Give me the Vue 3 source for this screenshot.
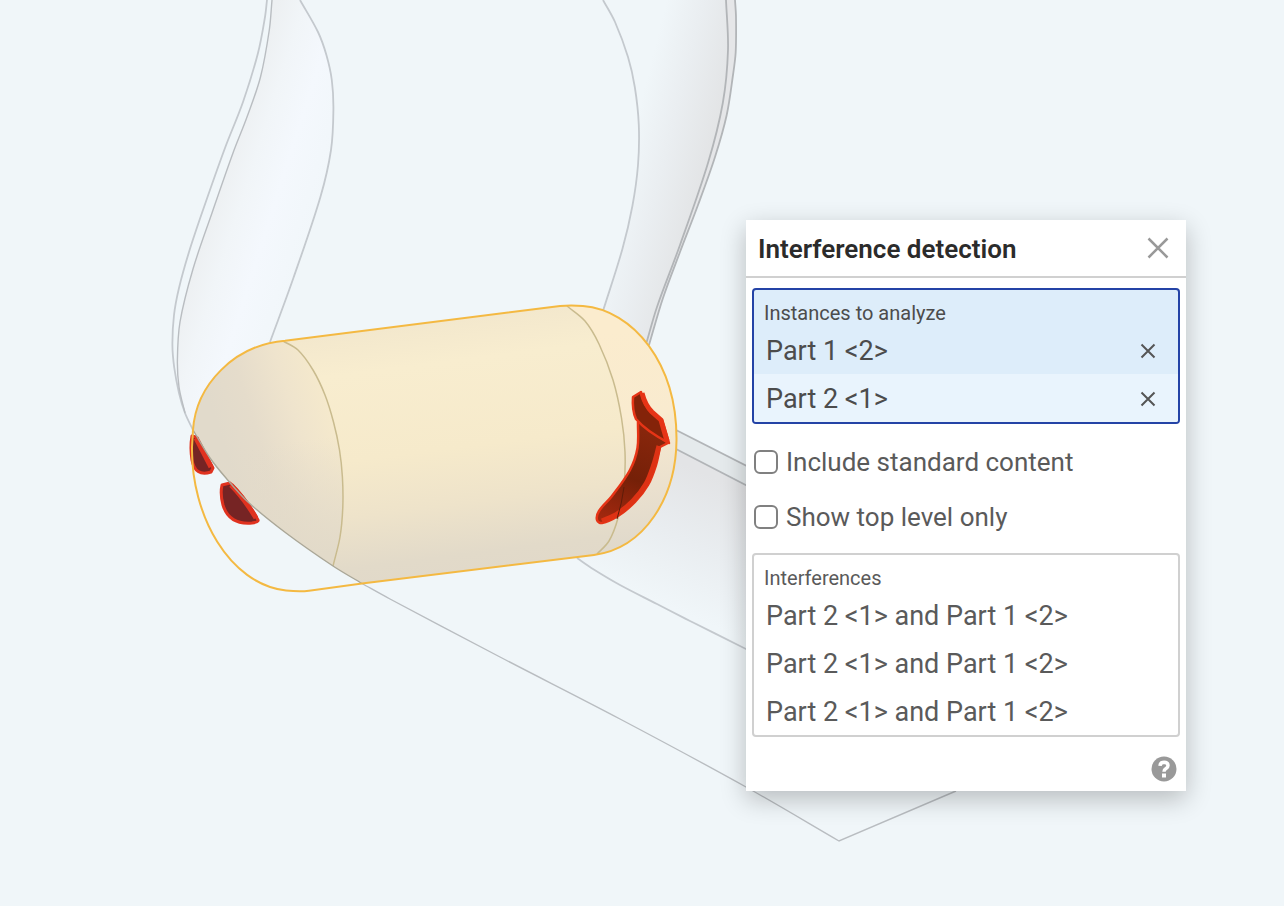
<script setup>
import { ref } from 'vue'

const instances = ref(['Part 1 <2>', 'Part 2 <1>'])
const interferences = [1, 2, 3].map((id) => ({ id, text: 'Part 2 <1> and Part 1 <2>' }))
const includeStandard = ref(false)
const topLevelOnly = ref(false)
const open = ref(true)

// Smooth curve through the points; handle lengths follow each segment's own length.
function spline(points) {
  const n = points.length
  const at = (i) => points[Math.min(Math.max(i, 0), n - 1)]
  const handle = (from, to, length) => {
    const size = Math.hypot(to[0] - from[0], to[1] - from[1]) || 1
    return [((to[0] - from[0]) / size) * length, ((to[1] - from[1]) / size) * length]
  }
  let d = `M${points[0]}`
  for (let i = 0; i < n - 1; i++) {
    const [a, b, c, e] = [at(i - 1), at(i), at(i + 1), at(i + 2)]
    const length = Math.hypot(c[0] - b[0], c[1] - b[1]) / 3
    const out = handle(a, c, length)
    const back = handle(b, e, length)
    d += `C${b[0] + out[0]},${b[1] + out[1]} ${c[0] - back[0]},${c[1] - back[1]} ${c}`
  }
  return d
}
const joined = (d) => d.replace(/^M/, 'L')

const leftOuter = [[267, 0], [265, 17], [258, 53], [243, 102], [225, 148], [203, 210], [189, 252], [179, 288], [174, 315], [172.4, 345], [174.3, 368], [179, 393], [185, 413], [193, 430]]
const leftInner = [[272, 0], [269.3, 30], [260.5, 77], [247, 117], [233, 153], [212, 213], [193, 269], [180, 322], [177.4, 360], [179, 387], [185, 413]]
const leftFront = [[300, 0], [318, 32], [326.4, 55], [331.8, 80], [333.4, 110], [331, 150], [320.4, 197], [293.4, 278], [270, 342]]
const rightFront = [[603, 0], [615, 22], [628, 57], [634.8, 87], [638.8, 125], [638, 165], [632.4, 206], [622.4, 249], [603, 311]]
const rightInner = [[726, 0], [728, 50], [722.8, 103], [708, 163], [680, 245], [657, 307], [646.7, 342]]
const rightOuter = [[735, 0], [736, 17], [735.7, 52], [733, 75], [726.7, 115], [715, 157], [698, 205], [680, 252], [663, 298], [649, 345]]
const cut = [[193, 430], [210, 458], [226, 478], [248, 502], [286, 533], [333, 566], [362, 583.5]]
const ground = [[362, 583.5], [390, 599], [500, 657], [620, 719], [746, 787], [839, 841]]
const lowerEdge = [[577, 558], [593, 569], [620, 585], [657, 604], [690, 621], [746, 649], [800, 677]]
const leftSeam = [[283, 341], [298, 350], [313, 370], [325, 395], [333.5, 422], [339.5, 450], [342.4, 477], [342.8, 507], [340, 537], [333, 566]]
const rightSeam = [[567, 306], [585, 321], [599, 344], [613, 380], [621.5, 418], [625, 452], [624, 485], [618, 518], [609, 541], [597, 554]]

const capTop = 'M193 430C196 385 234 345 285 340.7'
const capRight = 'L540 308.500L560 306Q571 305 583 306C633 310 677 363 676.500 440C676 497 645 548 594 555'
const bodyOutline = `${capTop}${capRight}L362 583.500`
const lowerOutline = 'M362 583.500L309 590.700Q300 592 286 590.500C229 584 191 515 192 447L193 430'
const body = bodyOutline + joined(spline([...cut].reverse())) + 'Z'
const dome = capTop + joined(spline(leftSeam)) + joined(spline(cut.slice(0, 6).reverse())) + 'Z'
const farCap = 'M567 306L583 306C633 310 677 363 676.500 440C676 497 645 548 597 554' + joined(spline([...rightSeam].reverse())) + 'Z'
const leftFace = spline(leftInner) + 'L193 430 L213 385 L233 365 L270 342' + joined(spline([...leftFront].reverse())) + 'Z'
const rightFace = spline(rightFront) + 'L649 345' + joined(spline([...rightInner].reverse())) + 'Z'
const rightRim = spline(rightInner) + joined(spline([...rightOuter].reverse())) + 'Z'
const lowerFace = spline(lowerEdge) + 'L800 515 L676 449 L675 460 L655 507 L640 525 L615 546Z'

const hornTail = spline([[638, 422], [637.5, 448], [630, 470], [612, 496], [599, 511], [597, 520], [602, 523], [618, 516], [635, 502], [648, 485], [656, 465], [660, 447]]) + 'L668 443 L640 422Z'
const hornShine = spline([[659, 446], [654, 464], [646, 484], [633, 501], [617, 514], [602, 521]])
</script>

<template>
  <main class="workspace">
    <svg class="model" viewBox="0 0 1284 906" preserveAspectRatio="xMinYMin slice" role="img" aria-label="Model view">
      <defs>
        <linearGradient id="leftShade" gradientUnits="userSpaceOnUse" x1="215" y1="200" x2="325" y2="235">
          <stop offset="0" stop-color="#edf0f2" />
          <stop offset=".22" stop-color="#f1f5f8" />
          <stop offset=".5" stop-color="#f4f8fd" />
          <stop offset="1" stop-color="#f0f6f9" />
        </linearGradient>
        <linearGradient id="rightShade" gradientUnits="userSpaceOnUse" x1="634" y1="130" x2="722" y2="152">
          <stop offset="0" stop-color="#f0f6f9" />
          <stop offset=".4" stop-color="#eaeef1" />
          <stop offset="1" stop-color="#e1e2e3" />
        </linearGradient>
        <linearGradient id="lowerShade" gradientUnits="userSpaceOnUse" x1="720" y1="480" x2="665" y2="605">
          <stop offset="0" stop-color="#e3e4e6" />
          <stop offset=".5" stop-color="#e9edf0" />
          <stop offset="1" stop-color="#f0f6f9" />
        </linearGradient>
        <linearGradient id="bodyShade" gradientUnits="userSpaceOnUse" x1="430" y1="323" x2="462" y2="575">
          <stop offset="0" stop-color="#f3e8cd" />
          <stop offset=".16" stop-color="#f8edcf" />
          <stop offset=".5" stop-color="#f6eacb" />
          <stop offset=".72" stop-color="#eee3ca" />
          <stop offset=".92" stop-color="#e2dac9" />
          <stop offset="1" stop-color="#e1d9c9" />
        </linearGradient>
        <linearGradient id="domeShade" gradientUnits="userSpaceOnUse" x1="222" y1="440" x2="335" y2="405">
          <stop offset="0" stop-color="#e1dacb" />
          <stop offset=".3" stop-color="#e5dccb" />
          <stop offset=".65" stop-color="#efe4cd" />
          <stop offset="1" stop-color="#f6eacc" />
        </linearGradient>
        <linearGradient id="domeFoot" gradientUnits="userSpaceOnUse" x1="300" y1="440" x2="315" y2="555">
          <stop offset="0" stop-color="#e2dac9" stop-opacity="0" />
          <stop offset="1" stop-color="#e2dac9" />
        </linearGradient>
        <linearGradient id="capShade" gradientUnits="userSpaceOnUse" x1="620" y1="330" x2="642" y2="545">
          <stop offset="0" stop-color="#fbecce" />
          <stop offset=".4" stop-color="#f9ebcf" />
          <stop offset=".75" stop-color="#eae0ce" />
          <stop offset="1" stop-color="#e0d9cb" />
        </linearGradient>
        <linearGradient id="hornShade" gradientUnits="userSpaceOnUse" x1="640" y1="430" x2="605" y2="520">
          <stop offset="0" stop-color="#87260c" />
          <stop offset=".5" stop-color="#752008" />
          <stop offset="1" stop-color="#a3280f" />
        </linearGradient>
      </defs>

      <path :d="leftFace" fill="url(#leftShade)" />
      <path :d="rightFace" fill="url(#rightShade)" />
      <path :d="rightRim" fill="#e5e6e8" />
      <path d="M676 430L800 493V515L676 449Z" fill="#e5eaec" />
      <path :d="lowerFace" fill="url(#lowerShade)" />

      <g class="edge">
        <path :d="spline(leftOuter)" />
        <path :d="spline(leftInner)" class="fine" />
        <path :d="spline(leftFront)" />
        <path :d="spline(rightFront)" />
        <path :d="spline(rightInner)" class="dark" />
        <path :d="spline(rightOuter)" class="dark" />
        <path d="M676 430L800 493M676 449L800 513" class="dark" />
        <path :d="spline(lowerEdge)" />
        <path :d="spline(ground) + 'L956 791'" class="fine" />
      </g>

      <path :d="body" fill="url(#bodyShade)" />
      <path :d="dome" fill="url(#domeShade)" />
      <path :d="dome" fill="url(#domeFoot)" />
      <path :d="farCap" fill="url(#capShade)" />
      <g class="seam">
        <path :d="spline(leftSeam)" />
        <path :d="spline(rightSeam)" />
      </g>

      <g stroke="#e0321f" stroke-width="3" stroke-linejoin="round" fill="#762424">
        <path d="M192 436L196 437L213 468L211 472Q195 477 192 460Q190 447 192 436Z" />
        <path d="M196 438L211 467" stroke-width="5" />
        <path d="M222 485L230 483Q246 498 258 520Q259 522 252 523Q229 525 223 505Q220 494 222 485Z" />
        <path d="M231 485Q244 498 256 518" stroke-width="5" fill="none" />
      </g>
      <path :d="spline(cut)" class="cut" />

      <g stroke="#e63416" stroke-width="2.5" stroke-linejoin="round">
        <path :d="hornTail" fill="url(#hornShade)" />
        <path :d="hornShine" fill="none" stroke="#de3214" stroke-width="5" />
        <path d="M633 397L641 392Q644 406 652 413L662 420L669 443Q646 431 636 419Q632 410 633 397Z" fill="#842309" />
        <path d="M642 393Q645 405 652 412L661 420L667 441" fill="none" stroke-width="5" />
      </g>
      <path d="M624 487Q622 503 617 519" fill="none" stroke="#5e1c09" stroke-width="1" />

      <path :d="bodyOutline" class="selected" />
      <path :d="lowerOutline" class="selected" />
    </svg>

    <section v-if="open" class="panel" aria-labelledby="panel-title">
      <header class="panel-header">
        <h1 id="panel-title">Interference detection</h1>
        <button type="button" class="icon-button close" aria-label="Close" @click="open = false">
          <svg width="22" height="22" viewBox="0 0 22 22"><path d="M1.500 1.500L20.500 20.500M20.500 1.500L1.500 20.500" /></svg>
        </button>
      </header>

      <div class="box selection">
        <h2>Instances to analyze</h2>
        <ul>
          <li v-for="item in instances" :key="item">
            <span>{{ item }}</span>
            <button type="button" class="icon-button remove" :aria-label="`Remove ${item}`" @click="instances = instances.filter((i) => i !== item)">
              <svg width="16" height="16" viewBox="0 0 16 16"><path d="M1.500 1.500L14.500 14.500M14.500 1.500L1.500 14.500" /></svg>
            </button>
          </li>
        </ul>
      </div>

      <div class="options">
        <label for="standard"><input id="standard" v-model="includeStandard" type="checkbox" /><span>Include standard content</span></label>
        <label for="top-level"><input id="top-level" v-model="topLevelOnly" type="checkbox" /><span>Show top level only</span></label>
      </div>

      <div class="box results">
        <h2>Interferences</h2>
        <ul>
          <li v-for="row in interferences" :key="row.id">{{ row.text }}</li>
        </ul>
      </div>

      <footer>
        <button type="button" class="icon-button" aria-label="Help">
          <svg width="26" height="26" viewBox="0 0 26 26">
            <circle cx="13" cy="13" r="12.500" fill="#999" />
            <path d="M9 9.800Q9.300 6.300 13.200 6.300Q17 6.500 17 9.500Q17 11.300 15 12.600Q13 13.800 13 15.800" fill="none" stroke="#fff" stroke-width="3.500" />
            <rect x="11" y="17.500" width="4" height="4" fill="#fff" />
          </svg>
        </button>
      </footer>
    </section>
  </main>
</template>

<style>
body {
  margin: 0;
  background: #f0f6f9;
}
</style>

<style scoped>
.workspace {
  position: relative;
  min-height: 100vh;
  overflow: hidden;
  background: #f0f6f9;
  color: #5a5a5a;
  font-family: Roboto, "Liberation Sans", sans-serif;
}
.model {
  position: absolute;
  inset: 0;
  width: 100%;
  height: 100%;
}
.edge path {
  fill: none;
  stroke: #c4c9ce;
  stroke-width: 1.8;
}
.edge .fine {
  stroke: #b9bdc1;
  stroke-width: 1.4;
}
.edge .dark {
  stroke: #b2b5b8;
}
.seam path {
  fill: none;
  stroke: #c9bb8e;
  stroke-width: 1.5;
}
.cut {
  fill: none;
  stroke: #aaa798;
  stroke-width: 1.4;
}
.selected {
  fill: none;
  stroke: #f4b942;
  stroke-width: 2;
}
.panel {
  position: absolute;
  top: 220px;
  right: 98px;
  width: 440px;
  box-sizing: border-box;
  background: #fff;
  box-shadow: 0 8px 24px rgba(0, 0, 0, 0.24);
}
.panel-header {
  display: flex;
  align-items: center;
  justify-content: space-between;
  height: 56px;
  padding: 0 17px 0 12px;
  border-bottom: 2px solid #d0d0d0;
}
h1,
h2,
ul {
  margin: 0;
  padding: 0;
}
h1 {
  padding-top: 2px;
  color: #2b2b2b;
  font-size: 26px;
  font-weight: 600;
  line-height: 54px;
}
.icon-button {
  display: flex;
  padding: 0;
  border: 0;
  background: none;
  cursor: pointer;
}
.close svg,
.remove svg {
  fill: none;
  stroke: #999;
  stroke-width: 2.500;
}
.remove svg {
  stroke: #555;
  stroke-width: 2;
}
.box {
  margin: 0 6px;
  border: 2px solid #d0d0d0;
  border-radius: 4px;
  overflow: hidden;
}
.selection {
  margin-top: 10px;
  border-color: #2443a6;
  background: #ddedfa;
  color: #4c4c4c;
}
h2 {
  padding: 10px 10px 0;
  font-size: 20px;
  font-weight: 400;
  line-height: 26px;
}
li {
  display: flex;
  align-items: center;
  justify-content: space-between;
  height: 48px;
  box-sizing: border-box;
  padding: 2px 22px 0 12px;
  font-size: 27px;
  line-height: 46px;
}
.selection li + li {
  background: #e9f4fd;
}
.options {
  display: grid;
  padding: 10px 8px 9px;
}
.options label {
  display: flex;
  align-items: center;
  gap: 8px;
  font-size: 26px;
  line-height: 53px;
}
.options span {
  padding-top: 2px;
}
.options input {
  appearance: none;
  width: 24px;
  height: 24px;
  margin: 0;
  border: 2px solid #808080;
  border-radius: 6px;
  background: #fff;
}
.options input:checked {
  background: #2443a6;
}
footer {
  display: flex;
  justify-content: flex-end;
  padding: 19px 9px 9px;
}
</style>
